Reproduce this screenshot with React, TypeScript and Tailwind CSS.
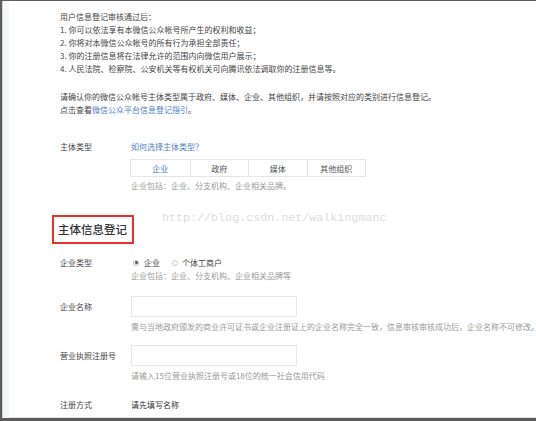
const font = { fontFamily: '"Noto Sans CJK SC", "Noto Sans", sans-serif' };

const tabs = ['企业', '政府', '媒体', '其他组织'];

function FormRow({ label, children }: { label: string; children: React.ReactNode }) {
  return (
    <div className="flex items-center">
      <div className="w-[71px] shrink-0 text-[#444]">{label}</div>
      <div className="flex-1">{children}</div>
    </div>
  );
}

export default function App() {
  return (
    <div
      className="relative w-[536px] h-[421px] overflow-hidden bg-white border-l-2 border-t border-b-[3px] border-[#5c5c5c] flex text-[8px] leading-[13px] whitespace-nowrap"
      style={font}
    >
      <div className="w-[7px] shrink-0 bg-[#f5f6f8] border-l border-[#d2d2d2]" />

      <div className="flex-1 pl-[51px] pt-[9px] border-b border-[#dcdcdc]">
        <div className="text-[#444]">
          <p>用户信息登记审核通过后：</p>
          <p>1. 你可以依法享有本微信公众帐号所产生的权利和收益；</p>
          <p>2. 你将对本微信公众帐号的所有行为承担全部责任；</p>
          <p>3. 你的注册信息将在法律允许的范围内向微信用户展示；</p>
          <p>4. 人民法院、检察院、公安机关等有权机关可向腾讯依法调取你的注册信息等。</p>
        </div>

        <div className="mt-[15px] text-[#444]">
          <p>请确认你的微信公众帐号主体类型属于政府、媒体、企业、其他组织，并请按照对应的类别进行信息登记。</p>
          <p>
            点击查看<span className="text-[#4f80c4]">微信公众平台信息登记指引</span>。
          </p>
        </div>

        <div className="mt-[24px]">
          <FormRow label="主体类型">
            <span className="text-[#4f80c4]">如何选择主体类型？</span>
          </FormRow>
          <div className="ml-[70px] mt-[6px] w-[236px] h-[18px] grid grid-cols-4 border border-[#e4e6ea]">
            {tabs.map((t, i) => (
              <div
                key={t}
                className={`flex items-center justify-center ${i > 0 ? 'border-l border-[#e4e6ea]' : ''} ${
                  i === 0 ? 'text-[#4f80c4]' : 'text-[#555]'
                }`}
              >
                {t}
              </div>
            ))}
          </div>
          <p className="ml-[71px] mt-[2px] text-[#9a9a9a]">企业包括：企业、分支机构、企业相关品牌。</p>
        </div>

        <div className="mt-[23px] -ml-[8px] w-[82px] h-[29px] border-2 border-[#e8312f] flex items-center px-[4px]">
          <span className="text-[11.5px] leading-none font-medium text-[#333]">主体信息登记</span>
        </div>

        <div className="mt-[12px]">
          <FormRow label="企业类型">
            <div className="flex items-center">
              <span className="w-[6px] h-[6px] rounded-full border border-[#bbb] flex items-center justify-center ml-[2px]">
                <span className="w-[3px] h-[3px] rounded-full bg-[#555]" />
              </span>
              <span className="ml-[5px] text-[#444]">企业</span>
              <span className="ml-[12px] w-[6px] h-[6px] rounded-full border border-[#ccc]" />
              <span className="ml-[4px] text-[#444]">个体工商户</span>
            </div>
          </FormRow>
          <p className="ml-[71px] text-[#9a9a9a]">企业包括：企业、分支机构、企业相关品牌等</p>
        </div>

        <div className="mt-[14px]">
          <FormRow label="企业名称">
            <div className="w-[166px] h-[21px] border border-[#e6e8eb]" />
          </FormRow>
          <p className="ml-[71px] mt-[3px] text-[#9a9a9a]">
            需与当地政府颁发的商业许可证书或企业注册证上的企业名称完全一致，信息审核审核成功后，企业名称不可修改。
          </p>
        </div>

        <div className="mt-[12px]">
          <FormRow label="营业执照注册号">
            <div className="w-[166px] h-[21px] border border-[#e6e8eb]" />
          </FormRow>
          <p className="ml-[71px] mt-[3px] text-[#9a9a9a]">请输入15位营业执照注册号或18位的统一社会信用代码</p>
        </div>

        <div className="mt-[16px]">
          <FormRow label="注册方式">
            <span className="text-[#333]">请先填写名称</span>
          </FormRow>
        </div>
      </div>

      <div
        className="absolute left-[160px] top-[210px] text-[11.7px] leading-[14px] text-[#dcdcdc] pointer-events-none"
        style={{ fontFamily: '"Liberation Mono", monospace' }}
      >
        http://blog.csdn.net/walkingmanc
      </div>
    </div>
  );
}
